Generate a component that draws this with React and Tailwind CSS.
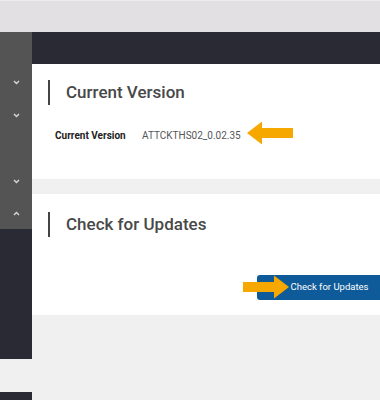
import React from 'react';

const Chevron = ({ up = false }) => (
  <svg width="7" height="5" viewBox="0 0 7 5" className="block">
    <path
      d={up ? 'M1 4 L3.5 1.5 L6 4' : 'M1 1 L3.5 3.5 L6 1'}
      fill="none"
      stroke="#d8d8d8"
      strokeWidth="1.4"
    />
  </svg>
);

const Arrow = ({ dir = 'left', className = '' }) => (
  <svg width="48" height="24" viewBox="0 0 48 24" className={className}>
    {dir === 'left' ? (
      <path d="M0 12 L15 0.5 L15 7 L46 7 L46 17 L15 17 L15 23.5 Z" fill="#f6a800" />
    ) : (
      <path d="M47 12 L32 0.5 L32 7 L1 7 L1 17 L32 17 L32 23.5 Z" fill="#f6a800" />
    )}
  </svg>
);

const SectionTitle = ({ children }) => (
  <div className="flex items-center h-[25px]">
    <div className="w-[2px] h-[25px] bg-[#444]" />
    <h2 className="ml-4 text-[17px] font-medium text-[#484848] leading-none">{children}</h2>
  </div>
);

export default function App() {
  return (
    <div
      className="relative w-[380px] h-[400px] overflow-hidden bg-[#f0f0f0]"
      style={{ fontFamily: 'Roboto, "Liberation Sans", sans-serif' }}
    >
      {/* browser top strip */}
      <div className="h-8 bg-[#e2e0e2] border-t border-[#ececec]" />

      <div className="flex">
        {/* sidebar */}
        <div className="w-8 shrink-0 flex flex-col">
          <div className="h-[197px] bg-[#545454] flex flex-col items-center">
            <div className="mt-[48px]"><Chevron /></div>
            <div className="mt-[28px]"><Chevron /></div>
            <div className="mt-[61px]"><Chevron /></div>
            <div className="mt-[27px]"><Chevron up /></div>
          </div>
          <div className="h-[130px] bg-[#2a2a35]" />
          <div className="h-[33px]" />
          <div className="h-[40px] bg-[#2a2a35]" />
        </div>

        {/* main */}
        <div className="flex-1 flex flex-col">
          <div className="h-8 bg-[#2a2a35]" />

          <div className="h-[115px] bg-white pl-4 pt-4">
            <SectionTitle>Current Version</SectionTitle>
            <div className="flex items-center mt-[23px] ml-[7px]">
              <span className="font-bold text-[#222] text-[10px] w-[87px]">Current Version</span>
              <span className="text-[#555] text-[10px]">ATTCKTHS02_0.02.35</span>
            </div>
          </div>

          <div className="h-[15px]" />

          <div className="h-[121px] bg-white pl-4 pt-[18px]">
            <SectionTitle>Check for Updates</SectionTitle>
            <div className="flex justify-end mt-[38px] mr-[-22px]">
              <button className="w-[145px] h-[25px] rounded-[3px] bg-[#0f5a98] text-white text-[9.5px] flex items-center justify-center">
                Check for Updates
              </button>
            </div>
          </div>
        </div>
      </div>

      <Arrow dir="left" className="absolute left-[247px] top-[121px]" />
      <Arrow dir="right" className="absolute left-[242px] top-[275px]" />
    </div>
  );
}
